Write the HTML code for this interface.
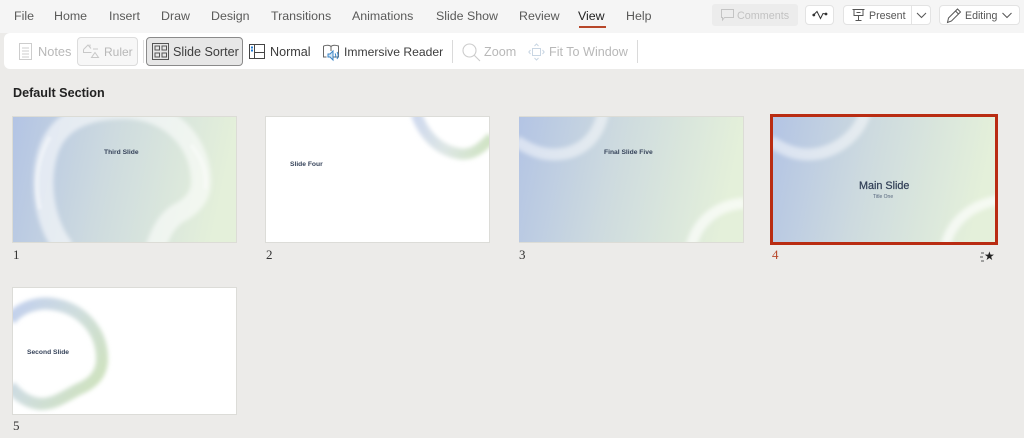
<!DOCTYPE html>
<html><head><meta charset="utf-8">
<style>
html,body{margin:0;padding:0}
body{width:1024px;height:438px;overflow:hidden;background:#ecebe9;position:relative;font-family:"Liberation Sans",sans-serif;}
.a{position:absolute;white-space:nowrap}
#top{left:0;top:0;width:1024px;height:33px;background:#f5f5f5}
#bar{left:4px;top:33px;width:1020px;height:36px;background:#fff;border-radius:6px 0 0 6px}
.m{top:9px;font-size:12.4px;line-height:15px;color:#5a5a59}
.t{top:44px;font-size:12.6px;line-height:16px;color:#3b3b3b}
.d{color:#b8b8b8}
.btn{background:#fff;border-radius:4px;border:1px solid #e3e3e3;box-sizing:border-box}
.sl{background:#fff;box-sizing:border-box;overflow:hidden}
.sl svg{display:block;position:absolute;left:0;top:0}
.st{font-weight:bold;color:#36435a;font-size:6.7px;line-height:9px}
.n{font-family:"Liberation Serif",serif;font-size:13px;line-height:14px;color:#333}
</style></head>
<body>
<div class="a" id="top"></div>
<div class="a" id="bar"></div>

<div class="a m" style="left:14px">File</div>
<div class="a m" style="left:54px">Home</div>
<div class="a m" style="left:109px">Insert</div>
<div class="a m" style="left:161px">Draw</div>
<div class="a m" style="left:211px">Design</div>
<div class="a m" style="left:271px">Transitions</div>
<div class="a m" style="left:352px">Animations</div>
<div class="a m" style="left:436px">Slide Show</div>
<div class="a m" style="left:519px">Review</div>
<div class="a m" style="left:578px;color:#222">View</div>
<div class="a" style="left:579px;top:26px;width:27px;height:2px;background:#b7472a"></div>
<div class="a m" style="left:626px">Help</div>

<div class="a" style="left:712px;top:4px;width:86px;height:22px;background:#ececec;border-radius:3px"></div>
<svg class="a" style="left:720px;top:8px" width="16" height="14" viewBox="0 0 16 14" fill="none" stroke="#c4c4c4"><path d="M1.500 1.500h12v8h-9l-2 2.500v-2.500h-1z"/></svg>
<div class="a" style="left:737px;top:9px;font-size:10.8px;line-height:14px;color:#c2c2c2">Comments</div>

<div class="a btn" style="left:805px;top:5px;width:29px;height:20px"></div>
<svg class="a" style="left:812px;top:9px" width="16" height="12" viewBox="0 0 16 12" fill="none" stroke="#333" stroke-width="1"><path d="M1.500 6L5 2.500L8.500 9.500L11 4.500L14 5"/><circle cx="1.800" cy="6" r=".9" fill="#333"/><circle cx="14" cy="5" r=".9" fill="#333"/></svg>

<div class="a btn" style="left:843px;top:5px;width:88px;height:20px"></div>
<div class="a" style="left:911px;top:5px;width:1px;height:20px;background:#e3e3e3"></div>
<svg class="a" style="left:851px;top:8px" width="16" height="15" viewBox="0 0 16 15" fill="none" stroke="#555"><path d="M1.500 1.500h12M3 1.500v6h9v-6M7.500 7.500v5M4.500 12.500h6M5.500 4.500h4"/></svg>
<div class="a" style="left:869px;top:9px;font-size:10.6px;line-height:14px;color:#555">Present</div>
<svg class="a" style="left:915px;top:12px" width="13" height="7" viewBox="0 0 13 7" fill="none" stroke="#555"><path d="M2 1l4.500 4.500L11 1"/></svg>

<div class="a btn" style="left:939px;top:5px;width:81px;height:20px"></div>
<svg class="a" style="left:946px;top:7px" width="16" height="17" viewBox="0 0 16 17" fill="none" stroke="#555"><path d="M1.500 15.500l1-4.500L11.500 2l3 3-9 9zM9.500 4l3 3"/></svg>
<div class="a" style="left:965px;top:9px;font-size:10.6px;line-height:14px;color:#555">Editing</div>
<svg class="a" style="left:1001px;top:12px" width="12" height="7" viewBox="0 0 12 7" fill="none" stroke="#555"><path d="M1.500 1l4.500 4.500L10.500 1"/></svg>

<!-- toolbar -->
<svg class="a" style="left:18px;top:42px" width="16" height="20" viewBox="0 0 16 20" fill="none" stroke="#cdcdcd"><path d="M1.500 1.500h12v16h-12zM4 6h7M4 9h7M4 12h7M4 15h7"/></svg>
<div class="a t d" style="left:38px;font-size:12.8px">Notes</div>
<div class="a" style="left:77px;top:37px;width:61px;height:29px;box-sizing:border-box;border:1px solid #dcdcdc;background:#f7f7f7;border-radius:4px"></div>
<svg class="a" style="left:82px;top:43px" width="19" height="17" viewBox="0 0 19 17" fill="none" stroke="#c8c8c8"><path d="M1.500 6.500L6 2l3 3.500M1.500 6.500v3h8M8 1.500v2M11 6h5M13 9.500l3.500 5h-7z"/></svg>
<div class="a t d" style="left:104px;font-size:12px">Ruler</div>
<div class="a" style="left:143px;top:40px;width:1px;height:23px;background:#dedede"></div>
<div class="a" style="left:146px;top:37px;width:97px;height:29px;box-sizing:border-box;border:1px solid #8a8a8a;background:#e7e7e7;border-radius:4px"></div>
<svg class="a" style="left:152px;top:43px" width="17" height="17" viewBox="0 0 17 17" fill="none" stroke="#555"><path d="M.5.500h16v16H.5zM3 3h4.500v4H3zM10 3h4.500v4H10zM3 10h4.500v4H3zM10 10h4.500v4H10z"/></svg>
<div class="a t" style="left:173px;color:#3d3d3d">Slide Sorter</div>
<svg class="a" style="left:249px;top:44px" width="17" height="16" viewBox="0 0 17 16" fill="none" stroke="#444"><path d="M.5.500h15v14H.5zM5.500.500v14M5.500 8.500h10"/><path d="M2 3.500h2M2 6.500h2" stroke="#1f78d1" stroke-width="2"/></svg>
<div class="a t" style="left:270px;color:#3d3d3d">Normal</div>
<svg class="a" style="left:322px;top:43px" width="19" height="19" viewBox="0 0 19 19" fill="none" stroke="#666"><path d="M1.500 3c3-1 6-1 7.500.5C10.500 2 13.500 2 16.500 3v11h-6M1.500 3v11h3M9 3.500V8"/><path d="M6 11h2l3-3v9l-3-3H6z" stroke="#3a86c8" fill="#d5e6f5"/><path d="M13 10.500c1 1 1 3 0 4M15 9c1.500 2 1.500 5 0 7" stroke="#3a86c8"/></svg>
<div class="a t" style="left:344px;color:#3d3d3d;font-size:12.15px">Immersive Reader</div>
<div class="a" style="left:452px;top:40px;width:1px;height:23px;background:#dadada"></div>
<svg class="a" style="left:462px;top:43px" width="19" height="19" viewBox="0 0 19 19" fill="none" stroke="#cccccc" stroke-width="1.100"><circle cx="7.500" cy="7.500" r="6.500"/><path d="M12 12l6 6"/></svg>
<div class="a t d" style="left:484px">Zoom</div>
<svg class="a" style="left:528px;top:43px" width="17" height="18" viewBox="0 0 17 18" fill="none" stroke="#c9d6e3"><path d="M4.500 5.500h8v7h-8zM6.500 3l2-2 2 2M6.500 15l2 2 2-2M2.500 7L.8 9l1.700 2M14.500 7l1.700 2-1.700 2"/></svg>
<div class="a t d" style="left:549px">Fit To Window</div>
<div class="a" style="left:637px;top:40px;width:1px;height:23px;background:#dadada"></div>

<div class="a" style="left:13px;top:85px;font-size:12.6px;line-height:16px;font-weight:bold;color:#222">Default Section</div>

<svg width="0" height="0" style="position:absolute"><defs>
<filter id="b1" x="-30%" y="-30%" width="160%" height="160%"><feGaussianBlur stdDeviation="2.200"/></filter>
<filter id="b2" x="-30%" y="-30%" width="160%" height="160%"><feGaussianBlur stdDeviation="1.200"/></filter>
<linearGradient id="bg" x1="0" y1="0" x2="1" y2="0.12"><stop offset="0" stop-color="#b3c4e4"/><stop offset=".45" stop-color="#cddadf"/><stop offset="1" stop-color="#e4f0da"/></linearGradient>
<linearGradient id="rg2" gradientUnits="userSpaceOnUse" x1="150" y1="0" x2="224" y2="30"><stop offset="0" stop-color="#cfd9ee"/><stop offset=".5" stop-color="#dde6e4"/><stop offset="1" stop-color="#cfe3c2"/></linearGradient>
<linearGradient id="rg5" gradientUnits="userSpaceOnUse" x1="0" y1="20" x2="95" y2="80"><stop offset="0" stop-color="#c2d0ec"/><stop offset=".5" stop-color="#cfdddd"/><stop offset="1" stop-color="#cfe2c0"/></linearGradient>
</defs></svg>

<!-- slide 1 -->
<div class="a sl" style="left:12px;top:116px;width:225px;height:127px;border:1px solid #dcdcd6">
<svg width="223" height="125" viewBox="0 0 223 125">
<rect width="223" height="125" fill="url(#bg)"/>
<path d="M52 132C29 105 24 55 39 25C51 2 76-8 112-8C152-8 186 20 188 62C189 80 178 90 164 97C154 104 148 114 142 132" fill="none" stroke="#fff" stroke-opacity=".58" stroke-width="20" filter="url(#b1)"/>
<path d="M27 92C21 65 25 40 37 20M178 28C190 43 194 55 192 72" fill="none" stroke="#fff" stroke-opacity=".35" stroke-width="4" filter="url(#b2)"/>
</svg>
<div class="a st" style="left:91px;top:31px">Third Slide</div>
</div>
<div class="a n" style="left:13px;top:248px">1</div>

<!-- slide 2 -->
<div class="a sl" style="left:265px;top:116px;width:225px;height:127px;border:1px solid #dcdcd8">
<svg width="223" height="125" viewBox="0 0 223 125">
<path d="M150-4C157 17 172 34 195 37C206 38 215 32 226 20" fill="none" stroke="url(#rg2)" stroke-width="11" filter="url(#b1)"/>
</svg>
<div class="a st" style="left:24px;top:43px">Slide Four</div>
</div>
<div class="a n" style="left:266px;top:248px">2</div>

<!-- slide 3 -->
<div class="a sl" style="left:519px;top:116px;width:225px;height:127px;border:1px solid #dcdcd6;border-left:0">
<svg width="224" height="125" viewBox="0 0 224 125">
<rect width="224" height="125" fill="url(#bg)"/>
<path d="M-3 24C15 36 30 40 48 36C68 31 80 16 84-4" fill="none" stroke="#fff" stroke-opacity=".5" stroke-width="12" filter="url(#b1)"/>
<path d="M172 130C178 105 197 88 226 86" fill="none" stroke="#fff" stroke-opacity=".65" stroke-width="11" filter="url(#b1)"/>
</svg>
<div class="a st" style="left:85px;top:31px">Final Slide Five</div>
</div>
<div class="a n" style="left:519px;top:248px">3</div>

<!-- slide 4 -->
<div class="a sl" style="left:770px;top:114px;width:228px;height:131px;border:3px solid #b92c12">
<svg width="222" height="125" viewBox="0 0 222 125">
<rect width="222" height="125" fill="url(#bg)"/>
<path d="M-3 24C15 36 30 40 48 36C68 31 86 16 92-4" fill="none" stroke="#fff" stroke-opacity=".5" stroke-width="12" filter="url(#b1)"/>
<path d="M172 130C178 105 197 88 226 83" fill="none" stroke="#fff" stroke-opacity=".65" stroke-width="10" filter="url(#b1)"/>
</svg>
<div class="a" style="left:86px;top:62px;font-size:10.8px;line-height:14px;color:#2f3d55;-webkit-text-stroke:.2px #2f3d55">Main Slide</div>
<div class="a" style="left:100px;top:77px;font-size:5px;line-height:7px;color:#56657c">Title One</div>
</div>
<div class="a n" style="left:772px;top:248px;color:#b7472a">4</div>
<div class="a" style="left:984px;top:249px;font-size:12px;line-height:15px;color:#222">★</div>
<svg class="a" style="left:980px;top:252px" width="6" height="10" viewBox="0 0 6 10" stroke="#555"><path d="M1 1h3M0 5h3M1 9h3"/></svg>

<!-- slide 5 -->
<div class="a sl" style="left:12px;top:287px;width:225px;height:128px;border:1px solid #dcdcd8">
<svg width="223" height="126" viewBox="0 0 223 126">
<path d="M-3 32C6 20 25 12 45 17C68 22 90 42 89 73C88 88 78 96 66 101C52 108 42 116 28 116C15 115 5 108-3 98" fill="none" stroke="url(#rg5)" stroke-width="12" filter="url(#b1)"/>
</svg>
<div class="a st" style="left:14px;top:60px">Second Slide</div>
</div>
<div class="a n" style="left:13px;top:419px">5</div>
</body></html>
